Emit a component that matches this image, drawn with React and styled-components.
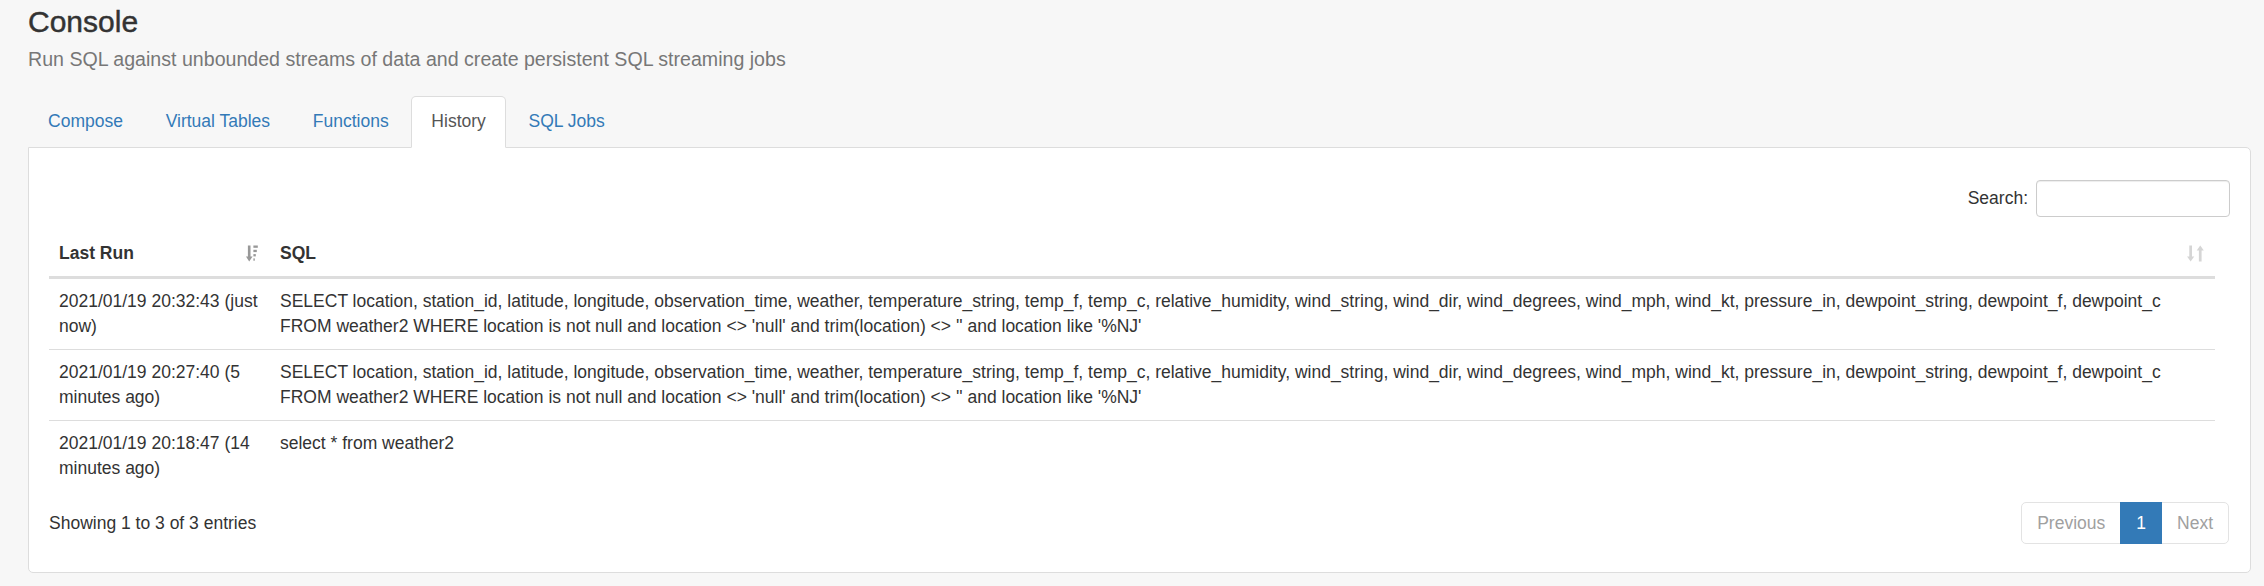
import React from "react";
import styled, { createGlobalStyle, css } from "styled-components";

const GlobalStyle = createGlobalStyle`
  html, body { margin: 0; padding: 0; }
  body {
    background: #f7f7f7;
    font-family: "Liberation Sans", Helvetica, Arial, sans-serif;
    font-size: 17.5px;
    line-height: 25px;
    color: #333;
  }
  * { box-sizing: border-box; }
`;

const Page = styled.div`
  padding: 5px 13px 14px 28px;
`;

const Title = styled.h3`
  margin: 0;
  font-size: 30px;
  font-weight: 500;
  line-height: 33px;
  color: #333;
  -webkit-text-stroke: 0.45px #333;
`;

const Subtitle = styled.p`
  margin: 8.7px 0 0;
  color: #777;
  font-size: 19.6px;
  line-height: 25px;
`;

const Tabs = styled.ul`
  list-style: none;
  margin: 24.3px 0 -1px;
  padding: 0;
  display: flex;
  position: relative;
  z-index: 1;
`;

const Tab = styled.li`
  margin-right: 2.5px;
`;

const TabLink = styled.a`
  display: block;
  padding: 12.5px 19.1px;
  line-height: 25px;
  border: 1px solid transparent;
  border-radius: 5px 5px 0 0;
  color: #337ab7;
  text-decoration: none;
  cursor: pointer;
  ${(p) =>
    p.$active &&
    css`
      background: #fff;
      border-color: #ddd #ddd transparent;
      color: #555;
    `}
`;

const Panel = styled.div`
  background: #fff;
  border: 1px solid #ddd;
  border-radius: 0 5px 5px 5px;
  padding: 32px 20px 28px;
`;

const FilterRow = styled.div`
  display: flex;
  justify-content: flex-end;
  align-items: center;
`;

const FilterLabel = styled.label`
  display: flex;
  align-items: center;
  font-weight: normal;
  white-space: nowrap;
`;

const SearchInput = styled.input`
  margin-left: 8px;
  width: 194px;
  height: 37.5px;
  padding: 6px 12px;
  font-family: inherit;
  font-size: 15px;
  color: #555;
  background: #fff;
  border: 1px solid #ccc;
  border-radius: 4px;
  box-shadow: inset 0 1px 1px rgba(0, 0, 0, 0.075);
  outline: none;
`;

const Table = styled.table`
  margin-top: 14px;
  width: calc(100% - 15px);
  border-collapse: collapse;
  table-layout: fixed;
`;

const Th = styled.th`
  padding: 10px;
  text-align: left;
  font-weight: bold;
  vertical-align: bottom;
  border-bottom: 3px solid #ddd;
  line-height: 25px;
`;

const HeadInner = styled.div`
  display: flex;
  justify-content: space-between;
  align-items: center;
`;

const SortIcon = styled.span`
  display: inline-flex;
  color: #333;
  opacity: ${(p) => (p.$active ? 0.5 : 0.2)};
  margin-right: ${(p) => (p.$active ? "2px" : "1px")};
`;

const Row = styled.tr`
  & + & > td {
    border-top: 1px solid #ddd;
  }
`;

const Td = styled.td`
  padding: 10px;
  vertical-align: top;
  line-height: 25px;
  word-wrap: break-word;
`;

const Footer = styled.div`
  margin-top: 10.8px;
  display: flex;
  justify-content: space-between;
  align-items: center;
`;

const Info = styled.div`
  white-space: nowrap;
`;

const Pagination = styled.ul`
  list-style: none;
  margin: 0 1px 0 0;
  padding: 0;
  display: flex;
`;

const PageItem = styled.li`
  & + & {
    margin-left: -1px;
  }
  &:first-child > span {
    border-radius: 5px 0 0 5px;
  }
  &:last-child > span {
    border-radius: 0 5px 5px 0;
  }
`;

const PageLink = styled.span`
  display: block;
  padding: 7.5px 15px;
  line-height: 25px;
  border: 1px solid #e3e3e3;
  background: #fff;
  color: #a0a0a0;
  ${(p) =>
    p.$active &&
    css`
      background: #337ab7;
      border-color: #337ab7;
      color: #fff;
      position: relative;
      z-index: 1;
    `}
`;

const SortDescGlyph = () => (
  <svg width="12" height="17" viewBox="0 0 12 17" fill="currentColor">
    <path d="M1.9 0.5h2.6v11h2.1L3.2 16.5 0 11.5h1.9z" />
    <rect x="7.4" y="0.5" width="4.4" height="2.3" />
    <rect x="7.4" y="4.8" width="3.4" height="2.3" />
    <rect x="7.4" y="9.1" width="2.4" height="2.3" />
    <rect x="7.4" y="13.4" width="1.4" height="2.3" />
  </svg>
);

const SortBothGlyph = () => (
  <svg width="17" height="17" viewBox="0 0 17 17" fill="currentColor">
    <path d="M2.3 0.5h2.7v11h2.2L3.65 16.5 0.1 11.5h2.2z" />
    <path d="M11.9 16.5h2.7v-11h2.2L13.25 0.5 9.7 5.5h2.2z" />
  </svg>
);

const longSql =
  "SELECT location, station_id, latitude, longitude, observation_time, weather, temperature_string, temp_f, temp_c, relative_humidity, wind_string, wind_dir, wind_degrees, wind_mph, wind_kt, pressure_in, dewpoint_string, dewpoint_f, dewpoint_c FROM weather2 WHERE location is not null and location <> 'null' and trim(location) <> '' and location like '%NJ'";

const rows = [
  { when: "2021/01/19 20:32:43 (just now)", sql: longSql },
  { when: "2021/01/19 20:27:40 (5 minutes ago)", sql: longSql },
  { when: "2021/01/19 20:18:47 (14 minutes ago)", sql: "select * from weather2" },
];

const tabs = ["Compose", "Virtual Tables", "Functions", "History", "SQL Jobs"];

export default function App() {
  return (
    <>
      <GlobalStyle />
      <Page>
        <Title>Console</Title>
        <Subtitle>Run SQL against unbounded streams of data and create persistent SQL streaming jobs</Subtitle>
        <Tabs>
          {tabs.map((t) => (
            <Tab key={t}>
              <TabLink $active={t === "History"}>{t}</TabLink>
            </Tab>
          ))}
        </Tabs>
        <Panel>
          <FilterRow>
            <FilterLabel>
              Search:
              <SearchInput type="search" />
            </FilterLabel>
          </FilterRow>
          <Table>
            <colgroup>
              <col style={{ width: "221px" }} />
              <col />
            </colgroup>
            <thead>
              <tr>
                <Th>
                  <HeadInner>
                    <span>Last Run</span>
                    <SortIcon $active>
                      <SortDescGlyph />
                    </SortIcon>
                  </HeadInner>
                </Th>
                <Th>
                  <HeadInner>
                    <span>SQL</span>
                    <SortIcon>
                      <SortBothGlyph />
                    </SortIcon>
                  </HeadInner>
                </Th>
              </tr>
            </thead>
            <tbody>
              {rows.map((r, i) => (
                <Row key={i}>
                  <Td>{r.when}</Td>
                  <Td>{r.sql}</Td>
                </Row>
              ))}
            </tbody>
          </Table>
          <Footer>
            <Info>Showing 1 to 3 of 3 entries</Info>
            <Pagination>
              <PageItem>
                <PageLink>Previous</PageLink>
              </PageItem>
              <PageItem>
                <PageLink $active>1</PageLink>
              </PageItem>
              <PageItem>
                <PageLink>Next</PageLink>
              </PageItem>
            </Pagination>
          </Footer>
        </Panel>
      </Page>
    </>
  );
}
